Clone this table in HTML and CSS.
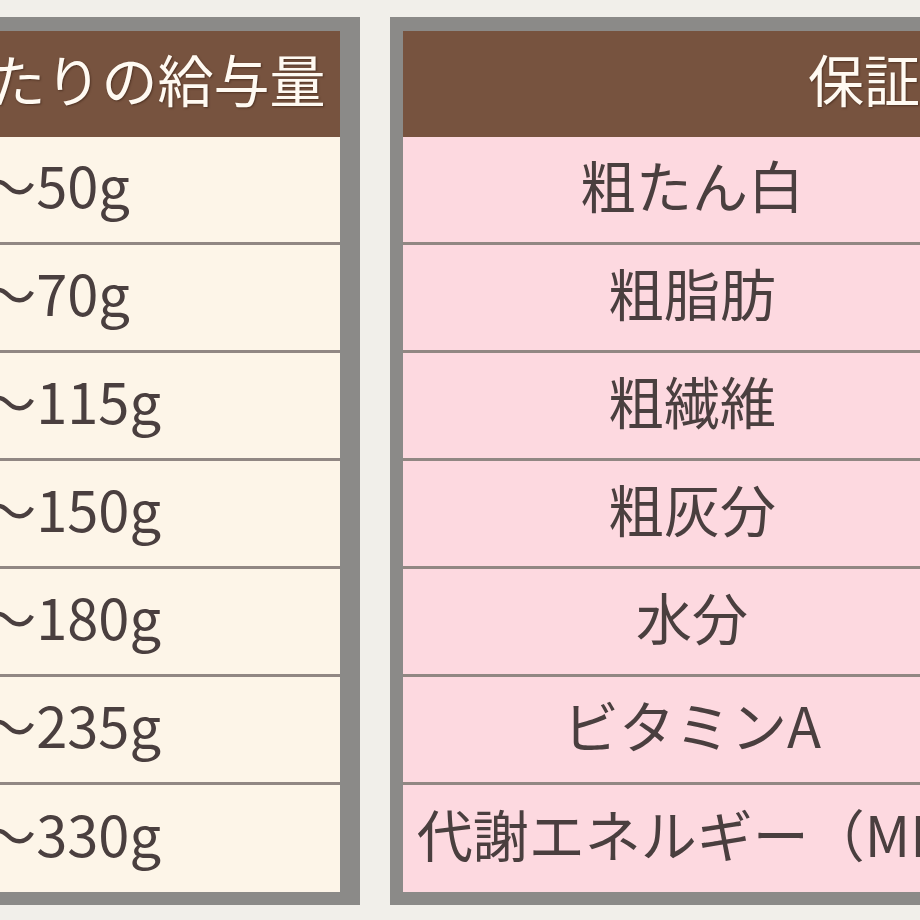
FILE: index.html
```html
<!DOCTYPE html>
<html lang="ja">
<head>
<meta charset="utf-8">
<title>給与量と保証成分</title>
<link rel="stylesheet" href="styles.css">
</head>
<body>
<div class="wrap">
  <table class="feed">
    <colgroup><col class="c-weight"><col class="c-amount"></colgroup>
    <thead>
      <tr><th>体重</th><th class="amt-head">1日あたりの給与量</th></tr>
    </thead>
    <tbody>
      <tr><td>1kg</td><td class="amt">20～50g</td></tr>
      <tr><td>2kg</td><td class="amt">40～70g</td></tr>
      <tr><td>3kg</td><td class="amt">60～115g</td></tr>
      <tr><td>5kg</td><td class="amt">90～150g</td></tr>
      <tr><td>7kg</td><td class="amt">95～180g</td></tr>
      <tr><td>10kg</td><td class="amt">99～235g</td></tr>
      <tr><td>15kg</td><td class="amt">99～330g</td></tr>
    </tbody>
  </table>
  <table class="spec">
    <colgroup><col class="c-name"><col class="c-value"></colgroup>
    <thead>
      <tr><th colspan="2">保証成分値</th></tr>
    </thead>
    <tbody>
      <tr><td>粗たん白</td><td>22.0%以上</td></tr>
      <tr><td>粗脂肪</td><td>10.0%以上</td></tr>
      <tr><td>粗繊維</td><td>4.0%以下</td></tr>
      <tr><td>粗灰分</td><td>8.0%以下</td></tr>
      <tr><td>水分</td><td>10.0%以下</td></tr>
      <tr><td>ビタミンA</td><td>5000IU/kg以上</td></tr>
      <tr><td>代謝エネルギー（M<span class="tight">E）</span></td><td>350kcal</td></tr>
    </tbody>
  </table>
</div>
</body>
</html>
```
FILE: styles.css
```css
html, body {
  margin: 0;
  padding: 0;
}
body {
  background: #f1efea;
  overflow: hidden;
  font-family: "Noto Sans CJK JP", "Noto Sans", sans-serif;
  width: 920px;
  height: 920px;
}
.wrap {
  display: flex;
  align-items: flex-start;
  gap: 30px;
  padding-top: 17px;
  margin-left: -494px;
}
table {
  flex: none;
  border-collapse: separate;
  border-spacing: 0;
  table-layout: fixed;
  border-style: solid;
  border-color: #8b8a88;
}
.feed {
  border-width: 14px 20px 13px 14px;
  width: 854px;
}
.spec {
  border-width: 14px 13px 13px 13px;
  width: 1116px;
}
.c-weight { width: 300px; }
.c-amount { width: 520px; }
.c-name { width: 578px; }
.c-value { width: 512px; }

thead tr { height: 106px; }
tbody tr { height: 108px; }
tbody tr:last-child { height: 107px; }

th {
  background: #77533f;
  color: #fffaf2;
  font-weight: normal;
  font-size: 56px;
  line-height: 1;
  padding: 0 0 12px 0;
  text-align: center;
  vertical-align: middle;
  text-shadow: 1px 1px 2px rgba(50, 25, 15, 0.55);
}
th.amt-head {
  padding-left: 12px;
}
td {
  font-size: 56px;
  line-height: 1;
  color: #4a3f3f;
  padding: 0 0 12px 0;
  text-align: center;
  vertical-align: middle;
  border-bottom: 3px solid #918783;
  white-space: nowrap;
}
tbody tr:last-child td {
  border-bottom: none;
}
.feed td { background: #fdf5e8; }
.spec td { background: #fdd9e0; }
.feed td.amt {
  text-align: left;
  padding-left: 98px;
}
.tight {
  letter-spacing: -16px;
}
```
